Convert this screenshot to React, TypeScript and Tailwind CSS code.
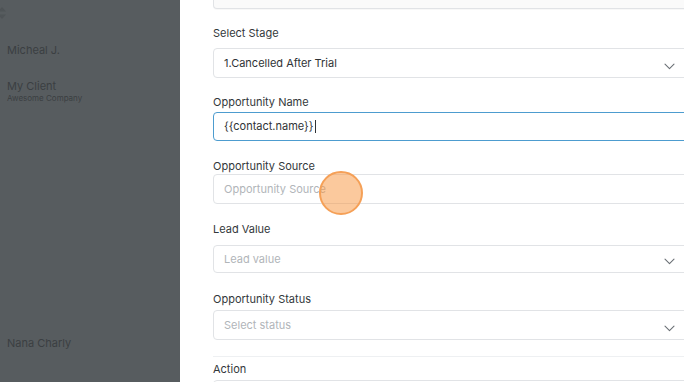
function Chevron() {
  return (
    <svg width="11" height="7" viewBox="0 0 11 7" fill="none" className="shrink-0">
      <path d="M1 1.2 5.5 5.6 10 1.2" stroke="#6b7075" strokeWidth="1.1" strokeLinecap="round" strokeLinejoin="round" />
    </svg>
  )
}

function Label({ text, className = "" }: { text: string; className?: string }) {
  return <div className={`h-[14px] text-[11px] leading-[14px] text-[#33383b] ${className}`}>{text}</div>
}

function SelectBox({
  value,
  placeholder,
  className = "",
}: {
  value?: string
  placeholder?: string
  className?: string
}) {
  return (
    <div className={`relative flex w-[480px] items-center rounded-[4px] border border-[#e1e3e6] bg-white pl-[10px] ${className}`}>
      <span className={`text-[11px] ${value ? "text-[#2f3336]" : "text-[#b1b5b9]"}`}>{value ?? placeholder}</span>
      <div className="absolute bottom-[7px] left-[450px]">
        <Chevron />
      </div>
    </div>
  )
}

export default function App() {
  return (
    <div className="flex h-[382px] w-[684px] overflow-hidden bg-white" style={{ fontFamily: "Inter, 'Noto Sans', sans-serif" }}>
      {/* dimmed sidebar */}
      <div className="relative h-full w-[180px] shrink-0 bg-[#575c5f] text-[#3b3f42]">
        <svg className="absolute left-[-3px] top-[6px]" width="10" height="14" viewBox="0 0 10 14">
          <path d="M5 1 9 5.5H1Z M5 13 9 8.5H1Z" fill="#4f5457" />
        </svg>
        <div className="pl-[7px] pt-[43px]">
          <div className="text-[11px] leading-[14px]">Micheal J.</div>
          <div className="mt-[22px] text-[11px] leading-[14px]">My Client</div>
          <div className="text-[8px] leading-[10px]">Awesome Company</div>
          <div className="mt-[233px] text-[11px] leading-[14px]">Nana Charly</div>
        </div>
      </div>

      {/* form panel */}
      <div className="relative h-full flex-1 overflow-hidden pl-[33px]">
        <div className="h-[9px] w-[480px] rounded-b-[4px] border-x border-b border-[#e1e3e6] bg-[#fafafa] shadow-[0_1px_1px_rgba(0,0,0,0.03)]" />

        <Label text="Select Stage" className="mt-[17px]" />
        <SelectBox value="1.Cancelled After Trial" className="mt-[8px] h-[30px]" />

        <Label text="Opportunity Name" className="mt-[17px]" />
        <div className="mt-[3px] flex h-[29px] w-[480px] items-center rounded-[4px] border-[1.5px] border-[#4d9ccf] pl-[10px] text-[11px] text-[#2f3336]">
          {"{{contact.name}}"}
          <span className="ml-[1px] h-[13px] w-px bg-[#2f3336]" />
        </div>

        <Label text="Opportunity Source" className="mt-[18px]" />
        <div className="mt-[1px] flex h-[30px] w-[480px] items-center rounded-[4px] border border-[#e1e3e6] pl-[10px] text-[11px] text-[#b1b5b9]">
          Opportunity Source
        </div>

        <Label text="Lead Value" className="mt-[18px]" />
        <SelectBox placeholder="Lead value" className="mt-[9px] h-[28px]" />

        <Label text="Opportunity Status" className="mt-[19px]" />
        <SelectBox placeholder="Select status" className="mt-[4px] h-[30px]" />

        <div className="mt-[16px] h-px w-[480px] bg-[#eef0f2]" />

        <Label text="Action" className="mt-[5px]" />
        <div className="mt-[4px] h-[30px] w-[480px] rounded-[4px] border border-[#e1e3e6]" />

        {/* click indicator */}
        <div className="absolute left-[139px] top-[171px] h-[44px] w-[44px] rounded-full border-2 border-[#f5a057] bg-[#f7943c]/50" />
      </div>
    </div>
  )
}
